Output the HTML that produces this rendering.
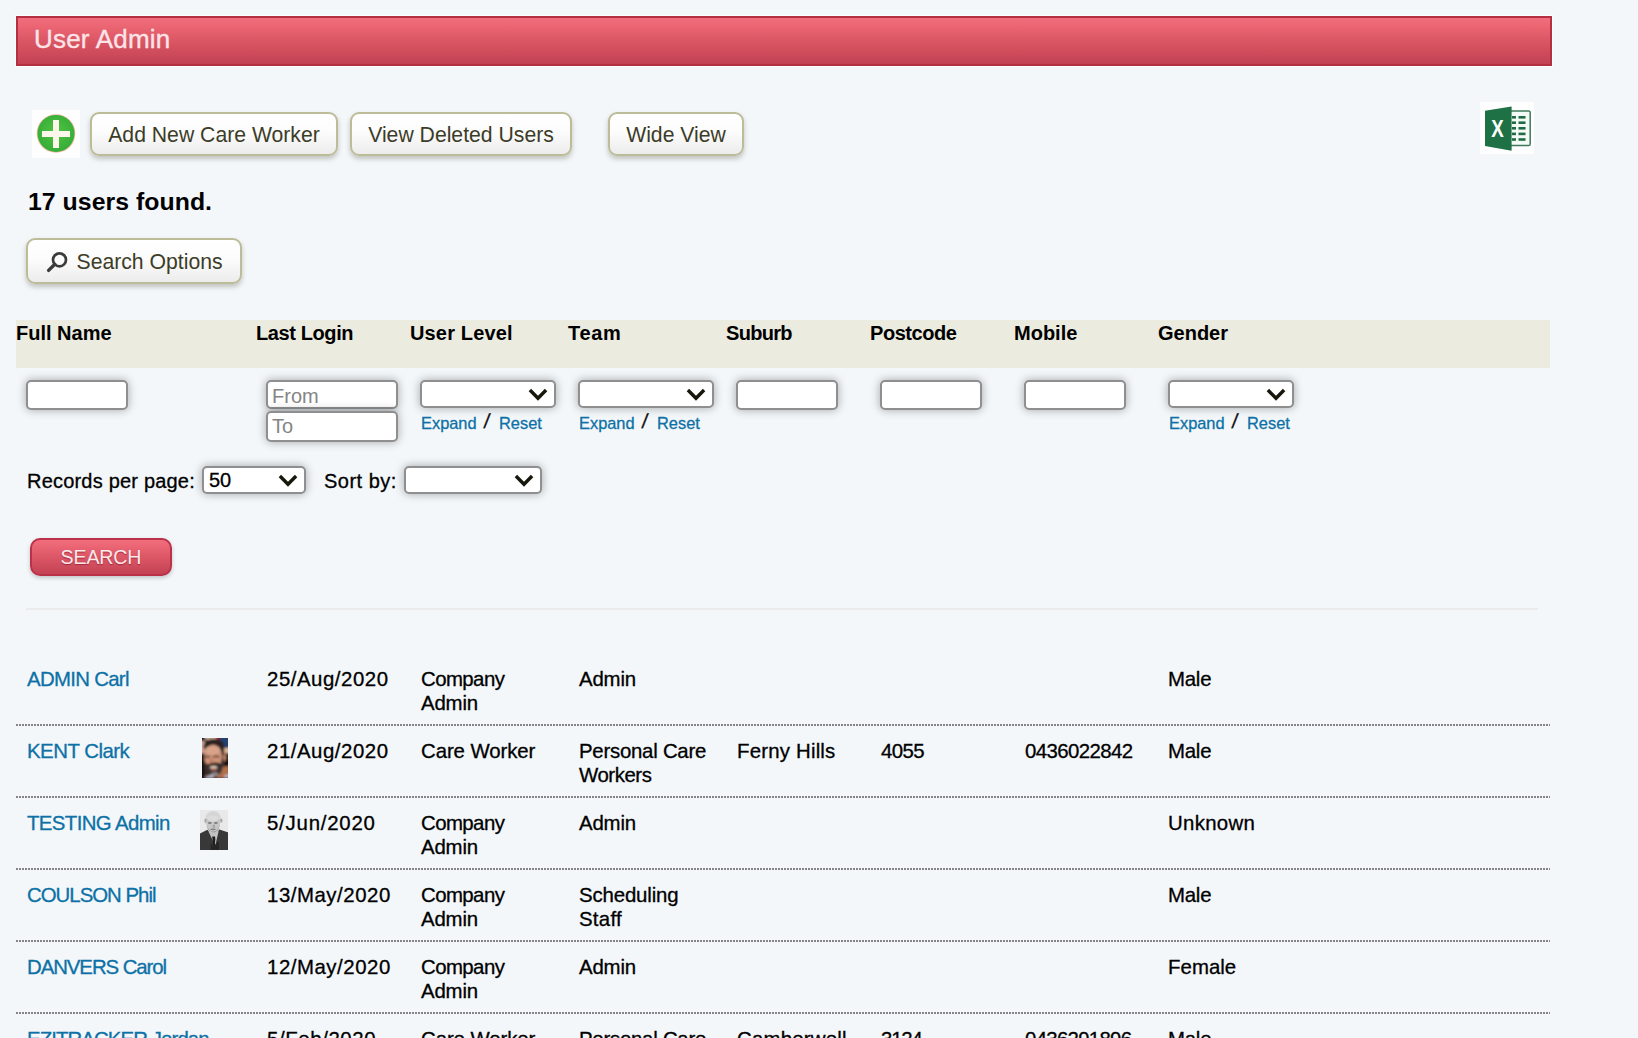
<!DOCTYPE html>
<html lang="en">
<head>
<meta charset="utf-8">
<title>User Admin</title>
<style>
*{box-sizing:border-box}
html,body{margin:0;padding:0}
body{width:1638px;height:1038px;overflow:hidden;background:#f3f7fa;font-family:"Liberation Sans",sans-serif;font-size:20px;line-height:24px;color:#000;position:relative}
.abs{position:absolute}
#bar{left:16px;top:16px;width:1536px;height:50px;border:2px solid #b52f43;background:linear-gradient(#f36e7c 0%,#e6606e 28%,#d5515f 62%,#c24253 100%);box-shadow:0 0 1px 1px rgba(255,255,255,.7)}
#bar h1{margin:0;position:absolute;left:16px;top:5px;font-size:26px;line-height:32px;font-weight:normal;color:#fde4e8;letter-spacing:.2px;-webkit-text-stroke:.35px #fde4e8}
.btn{position:absolute;height:44px;border:2px solid #bdbc99;border-radius:9px;background:linear-gradient(#ffffff 0%,#fcfcfc 45%,#ececec 100%);box-shadow:0 3px 5px rgba(60,60,40,.28);font-family:"Liberation Sans",sans-serif;font-size:21.2px;line-height:38px;color:#3c3c28;padding:2px 0 0 0;text-align:center;white-space:nowrap}
h2{margin:0;position:absolute;left:28px;top:187px;font-size:24.8px;line-height:30px;font-weight:bold;white-space:nowrap;letter-spacing:.05px}
#thead{left:16px;top:320px;width:1534px;height:48px;background:#ebebdf}
.th{position:absolute;top:321px;font-weight:bold;font-size:20px;line-height:24px;white-space:nowrap}
.inp{position:absolute;height:30px;border:2px solid #8f8f8f;border-radius:5px;background:#fff;box-shadow:0 0 10px rgba(0,0,0,.33);font-family:"Liberation Sans",sans-serif;font-size:20px;color:#000;padding:0 4px;margin:0}
.inp::placeholder{color:#858585;opacity:1}
.sel{position:absolute;height:28px;border:2px solid #8f8f8f;border-radius:5px;background:#fff;box-shadow:0 0 10px rgba(0,0,0,.33);-webkit-text-stroke:.3px;appearance:none;-webkit-appearance:none;font-family:"Liberation Sans",sans-serif;font-size:20px;line-height:22px;color:#000;padding:0 0 0 5px;margin:0}
.chev{position:absolute;width:20px;height:13px;pointer-events:none}
.lnk{position:absolute;font-size:16.4px;line-height:20px;white-space:nowrap}
a{color:#0d71a6;text-decoration:none}
.lbl{position:absolute;white-space:nowrap}
#search{position:absolute;left:30px;top:538px;width:142px;height:38px;border:2px solid #b9324a;border-radius:10px;background:linear-gradient(#f36e7c 0%,#e15b6a 40%,#c34254 100%);box-shadow:0 2px 4px rgba(0,0,0,.2);font-family:"Liberation Sans",sans-serif;font-size:19.6px;letter-spacing:-.15px;line-height:34px;text-shadow:0 1px 1px rgba(120,10,30,.55);color:#fde9ec;padding:0;text-align:center}
#hr{left:26px;top:608px;width:1512px;height:2px;background:#ebebeb}
table{position:absolute;left:16px;top:654px;width:1534px;border-collapse:collapse;table-layout:fixed;font-size:20.4px}
tr{background:repeating-linear-gradient(90deg,#858585 0,#858585 2px,rgba(133,133,133,0) 2px,rgba(133,133,133,0) 3px) left bottom/100% 2px no-repeat}
td{height:72px;vertical-align:top;padding:13px 0 9px 11px;border:0;white-space:nowrap}
td span{display:block}
td:last-child{padding-left:10px}
td,.lbl,.lnk{-webkit-text-stroke:.3px}
.ph{position:absolute}
</style>
</head>
<body>
<div id="bar" class="abs"><h1>User Admin</h1></div>

<svg class="abs" style="left:32px;top:110px" width="48" height="48" viewBox="0 0 48 48">
  <defs><radialGradient id="gg" cx="50%" cy="45%" r="55%"><stop offset="0" stop-color="#52c342"/><stop offset="1" stop-color="#35ad38"/></radialGradient></defs>
  <rect width="48" height="48" fill="#fefefe"/>
  <circle cx="24" cy="23.5" r="19.3" fill="#f2a487" opacity=".75"/>
  <circle cx="24" cy="23.4" r="18.5" fill="url(#gg)"/>
  <path d="M21 10h6v11h11v6H27v11h-6V27H10v-6h11z" fill="#fdf6ea"/>
</svg>

<button class="btn" style="left:90px;top:112px;width:248px">Add New Care Worker</button>
<button class="btn" style="left:350px;top:112px;width:222px">View Deleted Users</button>
<button class="btn" style="left:608px;top:112px;width:136px">Wide View</button>

<svg class="abs" style="left:1480px;top:102px" width="54" height="52" viewBox="0 0 54 52">
  <rect width="54" height="52" fill="#fdfefd"/>
  <rect x="29" y="9" width="21.2" height="34.6" rx="1.6" fill="#f4fbf6" stroke="#3f7a5b" stroke-width="1.5"/>
  <g fill="#1f6b44">
    <rect x="32" y="14" width="4" height="2.6"/><rect x="38.5" y="14" width="7" height="2.6"/>
    <rect x="32" y="19.4" width="4" height="2.6"/><rect x="38.5" y="19.4" width="7" height="2.6"/>
    <rect x="32" y="25" width="4" height="2.6"/><rect x="38.5" y="25" width="7" height="2.6"/>
    <rect x="32" y="30.6" width="4" height="2.6"/><rect x="38.5" y="30.6" width="7" height="2.6"/>
    <rect x="32" y="36.2" width="4" height="2.6"/><rect x="38.5" y="36.2" width="7" height="2.6"/>
  </g>
  <path d="M5 8.7 31.6 4.6V48.8L5 44.1z" fill="#1e7145"/>
  <text x="17.6" y="34.6" text-anchor="middle" font-family="Liberation Sans, sans-serif" font-weight="bold" font-size="23.4" fill="#ffffff" textLength="12.5" lengthAdjust="spacingAndGlyphs">X</text>
</svg>

<h2>17 users found.</h2>

<button class="btn" style="left:26px;top:238px;width:216px;height:46px;text-align:left;padding:1.5px 0 0 48.5px;line-height:39px">
<svg class="abs" style="left:16.5px;top:10px" width="26" height="26" viewBox="0 0 26 26"><circle cx="14.5" cy="9.8" r="6.5" fill="none" stroke="#3b3b3b" stroke-width="2.7"/><path d="M9.8 14.3 3.6 20.4" stroke="#3b3b3b" stroke-width="3.4" stroke-linecap="round"/></svg>Search Options</button>

<div id="thead" class="abs"></div>
<div class="th" style="left:16px">Full Name</div>
<div class="th" style="left:256px;letter-spacing:-0.4px">Last Login</div>
<div class="th" style="left:410px;letter-spacing:0.15px">User Level</div>
<div class="th" style="left:568px;letter-spacing:0.7px">Team</div>
<div class="th" style="left:726px;letter-spacing:-0.7px">Suburb</div>
<div class="th" style="left:870px;letter-spacing:-0.45px">Postcode</div>
<div class="th" style="left:1014px">Mobile</div>
<div class="th" style="left:1158px">Gender</div>

<input class="inp" type="text" style="left:26px;top:380px;width:102px">
<input class="inp" type="text" placeholder="From" style="left:266px;top:380px;width:132px;height:28.5px;padding-top:5px">
<input class="inp" type="text" placeholder="To" style="left:266px;top:411px;width:132px;height:30.5px;padding-top:0">
<select class="sel" style="left:420px;top:380px;width:136px"><option></option></select>
<svg class="chev" style="left:528px;top:388px" viewBox="0 0 20 13"><path d="M1.9 2 10 10.3 18.1 2" fill="none" stroke="#17170c" stroke-width="3.4"/></svg>
<select class="sel" style="left:578px;top:380px;width:136px"><option></option></select>
<svg class="chev" style="left:686px;top:388px" viewBox="0 0 20 13"><path d="M1.9 2 10 10.3 18.1 2" fill="none" stroke="#17170c" stroke-width="3.4"/></svg>
<input class="inp" type="text" style="left:736px;top:380px;width:102px">
<input class="inp" type="text" style="left:880px;top:380px;width:102px">
<input class="inp" type="text" style="left:1024px;top:380px;width:102px">
<select class="sel" style="left:1168px;top:380px;width:126px"><option></option></select>
<svg class="chev" style="left:1266px;top:388px" viewBox="0 0 20 13"><path d="M1.9 2 10 10.3 18.1 2" fill="none" stroke="#17170c" stroke-width="3.4"/></svg>

<div class="lnk" style="left:421px;top:413px"><a href="#">Expand</a> <span style="position:absolute;left:62.5px;top:-2px;font-size:20.5px;color:#111;transform:skewX(-7deg)">/</span><a href="#" style="position:absolute;left:78px">Reset</a></div>
<div class="lnk" style="left:579px;top:413px"><a href="#">Expand</a> <span style="position:absolute;left:62.5px;top:-2px;font-size:20.5px;color:#111;transform:skewX(-7deg)">/</span><a href="#" style="position:absolute;left:78px">Reset</a></div>
<div class="lnk" style="left:1169px;top:413px"><a href="#">Expand</a> <span style="position:absolute;left:62.5px;top:-2px;font-size:20.5px;color:#111;transform:skewX(-7deg)">/</span><a href="#" style="position:absolute;left:78px">Reset</a></div>

<div class="lbl" style="left:27px;top:469px;letter-spacing:.2px">Records per page:</div>
<select class="sel" style="left:202px;top:466px;width:104px"><option>50</option></select>
<svg class="chev" style="left:278px;top:474px" viewBox="0 0 20 13"><path d="M1.9 2 10 10.3 18.1 2" fill="none" stroke="#17170c" stroke-width="3.4"/></svg>
<div class="lbl" style="left:324px;top:469px;letter-spacing:.5px">Sort by:</div>
<select class="sel" style="left:404px;top:466px;width:138px"><option></option></select>
<svg class="chev" style="left:514px;top:474px" viewBox="0 0 20 13"><path d="M1.9 2 10 10.3 18.1 2" fill="none" stroke="#17170c" stroke-width="3.4"/></svg>

<button id="search">SEARCH</button>
<div id="hr" class="abs"></div>

<table>
<colgroup><col style="width:240px"><col style="width:154px"><col style="width:158px"><col style="width:158px"><col style="width:144px"><col style="width:144px"><col style="width:144px"><col></colgroup>
<tr><td><a href="#" style="letter-spacing:-0.70px">ADMIN Carl</a></td><td><span style="letter-spacing:0.54px">25/Aug/2020</span></td><td><span style="letter-spacing:-0.57px">Company</span><span style="letter-spacing:-0.18px">Admin</span></td><td><span style="letter-spacing:-0.18px">Admin</span></td><td></td><td></td><td></td><td><span style="letter-spacing:-0.24px">Male</span></td></tr>
<tr><td><a href="#" style="letter-spacing:-0.50px">KENT Clark</a><svg class="ph" style="left:186px;top:84px" width="26" height="40" viewBox="0 0 26 40"><defs><filter id="b1" x="-10%" y="-10%" width="120%" height="120%"><feGaussianBlur stdDeviation=".8"/></filter><clipPath id="c1"><rect width="26" height="40"/></clipPath></defs><rect width="26" height="40" fill="#3a2a24"/><g clip-path="url(#c1)"><g filter="url(#b1)">
<rect x="-2" y="-2" width="5" height="5.5" fill="#15152e"/><rect x="3" y="-2" width="11" height="4" fill="#bfa48c"/><rect x="14" y="-2" width="3.5" height="3.4" fill="#b30f22"/><rect x="17.5" y="-2" width="10" height="13" fill="#27406e"/>
<rect x="-2" y="3" width="5" height="13" fill="#c9a090"/><rect x="-2" y="15.5" width="4.2" height="27" fill="#120c0a"/><rect x="22" y="10" width="6" height="5.5" fill="#d9b897"/>
<rect x="22.6" y="20" width="5" height="11" fill="#140d0b"/><path d="M18 29 27 28V40H14z" fill="#b26f4c"/>
<ellipse cx="22.4" cy="19" rx="1.7" ry="4.4" fill="#c08466"/>
<ellipse cx="12" cy="8.3" rx="10.4" ry="7.4" fill="#2b2421"/><rect x="19.4" y="8" width="2.8" height="9.5" fill="#2e2622"/>
<ellipse cx="11.2" cy="19" rx="9" ry="12.2" fill="#cd9378"/><ellipse cx="10.6" cy="12.3" rx="7.6" ry="4.6" fill="#d8a389"/>
<path d="M3.4 24.5C4.6 35.5 9 38.8 12.6 38.8 17.4 38.8 21.6 34 21.8 20.5L19.6 21.5 18.8 26.4H6z" fill="#3b3331"/>
<path d="M5.4 26.6Q12 23 19 25.4L18.6 28.2Q12 25.8 5.8 28.8z" fill="#30241e"/>
<ellipse cx="11.6" cy="29.2" rx="3.7" ry="1.3" fill="#e2cfbb"/><ellipse cx="11.8" cy="31.5" rx="3.2" ry="1.1" fill="#b46c5a"/>
<ellipse cx="12.8" cy="36.2" rx="3.8" ry="2" fill="#8f8886"/>
<path d="M2.4 18.4Q5.4 17 8.2 18.2L8.2 19.6Q5.4 18.8 2.6 19.8z" fill="#3f2b23"/><path d="M10.8 18.2Q14 16.8 17.4 18.2L17.4 19.6Q14 18.6 10.8 19.6z" fill="#3f2b23"/><ellipse cx="9.4" cy="23" rx="1.9" ry="2" fill="#bf7d64"/>
<path d="M3 40 4.6 37.4 10.6 36.8 12.6 40z" fill="#b4b2c2"/><path d="M21.5 40 23 37 27 36V40z" fill="#b9b7c6"/>
</g></g></svg></td><td><span style="letter-spacing:0.54px">21/Aug/2020</span></td><td><span style="letter-spacing:-0.09px">Care Worker</span></td><td><span style="letter-spacing:-0.25px">Personal Care</span><span style="letter-spacing:-0.45px">Workers</span></td><td><span style="letter-spacing:0.20px">Ferny Hills</span></td><td><span style="letter-spacing:-0.60px">4055</span></td><td><span style="letter-spacing:-0.58px">0436022842</span></td><td><span style="letter-spacing:-0.24px">Male</span></td></tr>
<tr><td><a href="#" style="letter-spacing:-0.62px">TESTING Admin</a><svg class="ph" style="left:184px;top:156px" width="28" height="40" viewBox="0 0 28 40"><defs><filter id="b2" x="-10%" y="-10%" width="120%" height="120%"><feGaussianBlur stdDeviation=".7"/></filter><clipPath id="c2"><rect width="28" height="40"/></clipPath></defs><rect width="28" height="40" fill="#e9e9e9"/><g clip-path="url(#c2)"><g filter="url(#b2)">
<ellipse cx="13.2" cy="8" rx="7.7" ry="6.9" fill="#d6d6d6"/><ellipse cx="5.6" cy="10.8" rx="1.2" ry="2.2" fill="#a8a8a8"/><ellipse cx="21.3" cy="10.6" rx="1.2" ry="2.2" fill="#a8a8a8"/>
<ellipse cx="13.2" cy="13.6" rx="6.9" ry="9.2" fill="#c6c6c6"/><ellipse cx="13" cy="8.2" rx="5.8" ry="3.2" fill="#dcdcdc"/>
<path d="M7 15Q8 23 13.2 23.4 18.6 23 19.6 15 18 21.4 13.2 21.6 8.4 21.4 7 15z" fill="#9c9c9c"/>
<path d="M-2 24.5 7.4 19.8 13.5 27 19.4 19.4 30 23V42H-2z" fill="#383838"/>
<path d="M8.6 21.8 10.2 20.5Q13.5 24.5 17.6 20.5L18.6 21.4 15.4 35 13 31z" fill="#c2c2c2"/>
<path d="M12.2 26.6H15L15.3 29.2 14.8 35.5 13.4 36 12.6 30z" fill="#1b1b1b"/><path d="M10.5 33 13.5 36.5 19 31V42H10.5z" fill="#282828"/>
<ellipse cx="9.8" cy="13" rx="1.9" ry="1" fill="#7e7e7e"/><ellipse cx="15.9" cy="13" rx="1.9" ry="1" fill="#7e7e7e"/><ellipse cx="13.9" cy="16.2" rx="1.1" ry="1.7" fill="#a2a2a2"/><ellipse cx="13" cy="19.3" rx="2.8" ry=".9" fill="#808080"/>
</g></g></svg></td><td><span style="letter-spacing:0.78px">5/Jun/2020</span></td><td><span style="letter-spacing:-0.57px">Company</span><span style="letter-spacing:-0.18px">Admin</span></td><td><span style="letter-spacing:-0.18px">Admin</span></td><td></td><td></td><td></td><td><span style="letter-spacing:0.30px">Unknown</span></td></tr>
<tr><td><a href="#" style="letter-spacing:-1.00px">COULSON Phil</a></td><td><span style="letter-spacing:0.54px">13/May/2020</span></td><td><span style="letter-spacing:-0.57px">Company</span><span style="letter-spacing:-0.18px">Admin</span></td><td><span style="letter-spacing:-0.14px">Scheduling</span><span style="letter-spacing:0.27px">Staff</span></td><td></td><td></td><td></td><td><span style="letter-spacing:-0.24px">Male</span></td></tr>
<tr><td><a href="#" style="letter-spacing:-1.07px">DANVERS Carol</a></td><td><span style="letter-spacing:0.54px">12/May/2020</span></td><td><span style="letter-spacing:-0.57px">Company</span><span style="letter-spacing:-0.18px">Admin</span></td><td><span style="letter-spacing:-0.18px">Admin</span></td><td></td><td></td><td></td><td><span style="letter-spacing:0.04px">Female</span></td></tr>
<tr><td><a href="#" style="letter-spacing:-0.91px">EZITRACKER Jordan</a></td><td><span style="letter-spacing:0.60px">5/Feb/2020</span></td><td><span style="letter-spacing:-0.09px">Care Worker</span></td><td><span style="letter-spacing:-0.25px">Personal Care</span><span style="letter-spacing:-0.45px">Workers</span></td><td><span style="letter-spacing:0.20px">Camberwell</span></td><td><span style="letter-spacing:-1.20px">3124</span></td><td><span style="letter-spacing:-0.70px">0436291896</span></td><td><span style="letter-spacing:-0.24px">Male</span></td></tr>
</table>
</body>
</html>
